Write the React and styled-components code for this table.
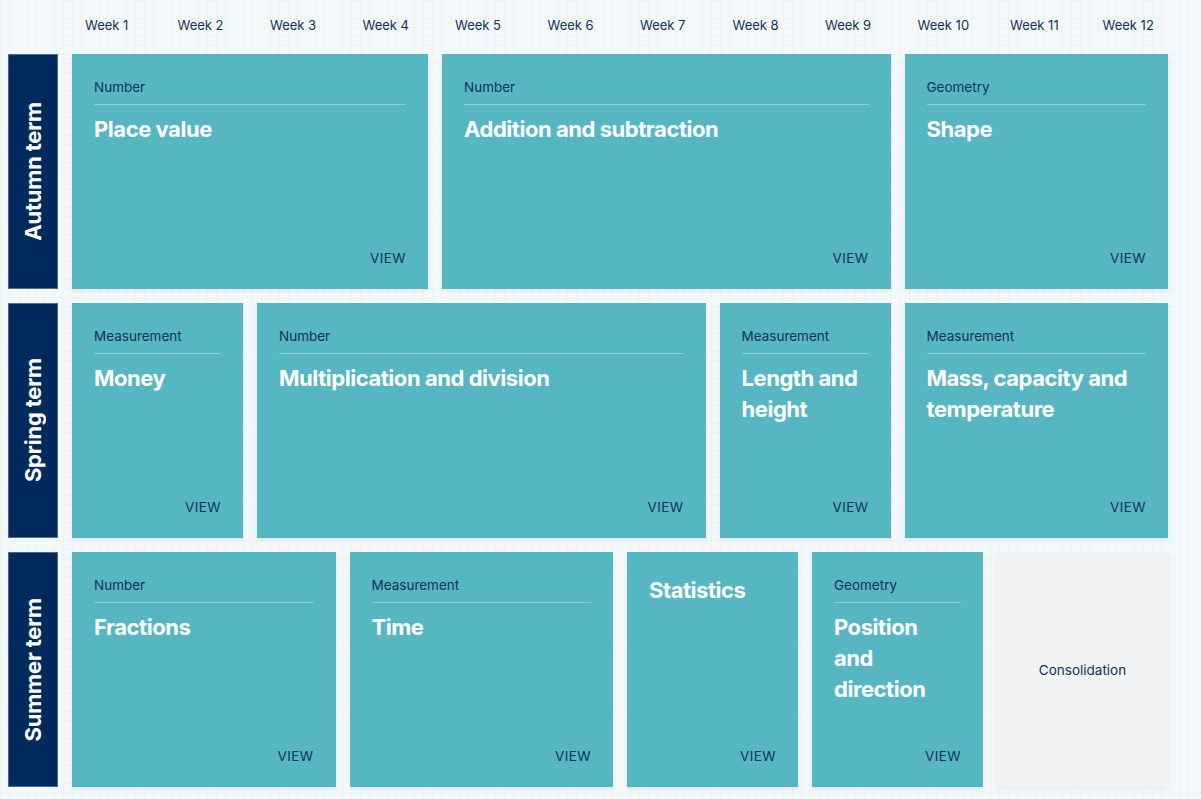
import React from 'react';
import styled, {createGlobalStyle} from 'styled-components';

const GlobalStyle = createGlobalStyle`
    html, body {
        margin: 0;
        padding: 0;
        background: #f5f8f9;
    }
    body {
        font-family: Inter, "Noto Sans", "Liberation Sans", sans-serif;
        color: #12335a;
    }
`

const Page = styled.div`
    min-height: 799px;
    box-sizing: border-box;
    padding: 0 33px 0 8px;
    background-color: #f5f8f9;
    background-image:
        linear-gradient(to right, #e9f4f5 1px, transparent 1px),
        linear-gradient(to bottom, #e9f4f5 1px, transparent 1px);
    background-size: 9px 9px;
`

const Grid = styled.div`
    display: grid;
    grid-template-columns: 50px repeat(12, 1fr);
    grid-template-rows: 40px 235px 235px 235px;
    column-gap: 14px;
    row-gap: 14px;
`

const WeekLabel = styled.div`
    display: flex;
    align-items: center;
    padding: 10px 0 0 13px;
    font-size: 13px;
    color: #12335a;
    white-space: nowrap;
`

const Term = styled.div`
    grid-column: 1;
    background: #002a5c;
    border: 1px solid #4f6b8c;
    box-sizing: border-box;
    display: flex;
    align-items: center;
    justify-content: center;
`

const TermText = styled.span`
    writing-mode: vertical-rl;
    transform: rotate(180deg);
    color: #fff;
    font-weight: 700;
    font-size: 22px;
    letter-spacing: -0.2px;
    white-space: nowrap;
`

const Card = styled.div`
    grid-column: ${p => p.$start} / span ${p => p.$span};
    background: #56b6c2;
    box-shadow: 0 2px 4px rgba(0, 0, 0, 0.08);
    padding: 23px 22px 21px;
    display: flex;
    flex-direction: column;
    min-width: 0;
`

const Category = styled.div`
    font-size: 13.5px;
    line-height: 20px;
    color: #12335a;
    padding-bottom: 7px;
    border-bottom: 1px solid rgba(255, 255, 255, 0.35);
    margin-bottom: 9px;
`

const Title = styled.div`
    font-size: 22px;
    line-height: 31px;
    font-weight: 700;
    color: #fff;
    letter-spacing: -0.45px;
`

const View = styled.div`
    margin-top: auto;
    align-self: flex-end;
    font-size: 13.5px;
    line-height: 20px;
    letter-spacing: 0.4px;
    color: #12335a;
`

const Blank = styled.div`
    grid-column: ${p => p.$start} / span ${p => p.$span};
    background: #f0f2f4;
    box-shadow: 0 2px 4px rgba(0, 0, 0, 0.06);
    display: flex;
    align-items: center;
    justify-content: center;
    font-size: 13.5px;
    color: #12335a;
`

const terms = [
    {
        name: 'Autumn term',
        blocks: [
            {start: 2, span: 4, cat: 'Number', title: 'Place value'},
            {start: 6, span: 5, cat: 'Number', title: 'Addition and subtraction'},
            {start: 11, span: 3, cat: 'Geometry', title: 'Shape'},
        ],
    },
    {
        name: 'Spring term',
        blocks: [
            {start: 2, span: 2, cat: 'Measurement', title: 'Money'},
            {start: 4, span: 5, cat: 'Number', title: 'Multiplication and division'},
            {start: 9, span: 2, cat: 'Measurement', title: 'Length and height'},
            {start: 11, span: 3, cat: 'Measurement', title: 'Mass, capacity and temperature'},
        ],
    },
    {
        name: 'Summer term',
        blocks: [
            {start: 2, span: 3, cat: 'Number', title: 'Fractions'},
            {start: 5, span: 3, cat: 'Measurement', title: 'Time'},
            {start: 8, span: 2, title: 'Statistics'},
            {start: 10, span: 2, cat: 'Geometry', title: 'Position and direction'},
            {start: 12, span: 2, blank: 'Consolidation'},
        ],
    },
];

const weeks = Array.from({length: 12}, (_, i) => `Week ${i + 1}`);

const App = () => {
    return (
        <Page>
            <GlobalStyle/>
            <Grid>
                <div/>
                {weeks.map(w => <WeekLabel key={w}>{w}</WeekLabel>)}
                {terms.map(term => (
                    <React.Fragment key={term.name}>
                        <Term><TermText>{term.name}</TermText></Term>
                        {term.blocks.map(b => b.blank ? (
                            <Blank key={b.blank} $start={b.start} $span={b.span}>{b.blank}</Blank>
                        ) : (
                            <Card key={b.title} $start={b.start} $span={b.span}>
                                {b.cat && <Category>{b.cat}</Category>}
                                <Title>{b.title}</Title>
                                <View>VIEW</View>
                            </Card>
                        ))}
                    </React.Fragment>
                ))}
            </Grid>
        </Page>
    );
}

export default App;
